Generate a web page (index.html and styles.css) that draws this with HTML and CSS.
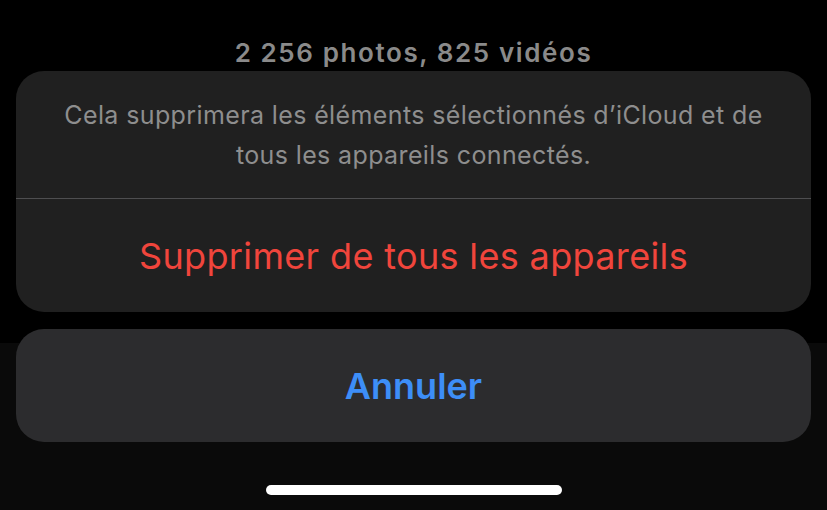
FILE: index.html
```html
<!DOCTYPE html>
<html lang="fr">
<head>
  <meta charset="UTF-8">
  <meta name="viewport" content="width=device-width, initial-scale=1.0">
  <title>Supprimer</title>
  <link rel="stylesheet" href="styles.css">
</head>
<body>

  <div class="sheet">
    <div class="count">2 256 photos, 825 vidéos</div>

    <div class="card">
      <p class="message">Cela supprimera les éléments sélectionnés d’iCloud et de<br>tous les appareils connectés.</p>
      <button class="action destructive">Supprimer de tous les appareils</button>
    </div>

    <div class="card cancel">
      <button class="action">Annuler</button>
    </div>

    <!-- barre d'accueil -->
    <div class="home-bar"></div>
  </div>

</body>
</html>
```

FILE: styles.css
```css
html, body {
  margin: 0;
  height: 510px;
  overflow: hidden;
}
body {
  font-family: Inter, "Noto Sans", sans-serif;
  background: linear-gradient(#000 343px, #0a0a0a 343px);
  color: #fff;
}
.sheet {
  display: flex;
  flex-direction: column;
  padding: 0 16px;
}
.count {
  height: 71px;
  box-sizing: border-box;
  padding-top: 37px;
  line-height: 32px;
  font-size: 26px;
  font-weight: 600;
  letter-spacing: 1.6px;
  color: #8a8a8a;
  text-align: center;
  white-space: nowrap;
}
.card {
  background-color: #202020;
  border-radius: 28px;
  overflow: hidden;
}
.card.cancel {
  margin-top: 17px;
  background-color: #2c2c2e;
}
.message {
  margin: 0;
  padding: 24px 20px;
  height: 128px;
  box-sizing: border-box;
  font-size: 25px;
  line-height: 40px;
  letter-spacing: 0.38px;
  color: #8e8e8e;
  text-align: center;
  white-space: nowrap;
  border-bottom: 1px solid #4e4e50;
}
.action {
  display: block;
  width: 100%;
  height: 113px;
  padding: 0;
  border: none;
  background: none;
  font-family: inherit;
  font-size: 36px;
  color: #3d8ef7;
  font-weight: 600;
  cursor: pointer;
}
.action.destructive {
  color: #f0453c;
  font-weight: 400;
  letter-spacing: 0.35px;
}
.home-bar {
  align-self: center;
  width: 296px;
  height: 10px;
  margin-top: 43px;
  border-radius: 5px;
  background-color: #fff;
}
```
